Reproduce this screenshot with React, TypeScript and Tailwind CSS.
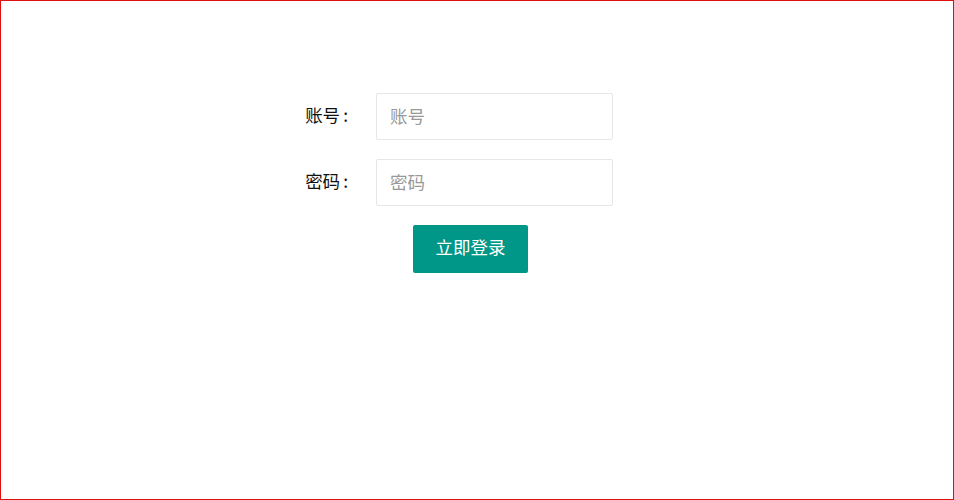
import React from "react";

export default function App() {
  const font = { fontFamily: '"Noto Sans CJK SC", "Noto Sans", sans-serif' };
  return (
    <div
      className="h-[500px] w-[954px] border border-[#e01010] bg-white text-[17.5px] text-[#333]"
      style={font}
    >
      <div className="ml-[289px] mt-[92px] flex flex-col">
        <div className="flex items-center">
          <label className="w-[86px] pr-[28px] pb-[3px] text-right text-[#111]">
            账号<span className="ml-[3px]">:</span>
          </label>
          <input
            className="h-[47px] w-[237px] rounded-[2px] border border-[#e6e6e6] px-[13px] pb-[2px] text-[17.5px] text-[#333] outline-none placeholder:text-[#999]"
            placeholder="账号"
            style={font}
          />
        </div>
        <div className="mt-[19px] flex items-center">
          <label className="w-[86px] pr-[28px] pb-[3px] text-right text-[#111]">
            密码<span className="ml-[3px]">:</span>
          </label>
          <input
            type="password"
            className="h-[47px] w-[237px] rounded-[2px] border border-[#e6e6e6] px-[13px] pb-[2px] text-[17.5px] text-[#333] outline-none placeholder:text-[#999]"
            placeholder="密码"
            style={font}
          />
        </div>
        <button
          className="ml-[123px] mt-[19px] h-[48px] w-[115px] rounded-[2px] bg-[#009688] pb-[3px] text-[17.5px] text-white"
          style={font}
        >
          立即登录
        </button>
      </div>
    </div>
  );
}
